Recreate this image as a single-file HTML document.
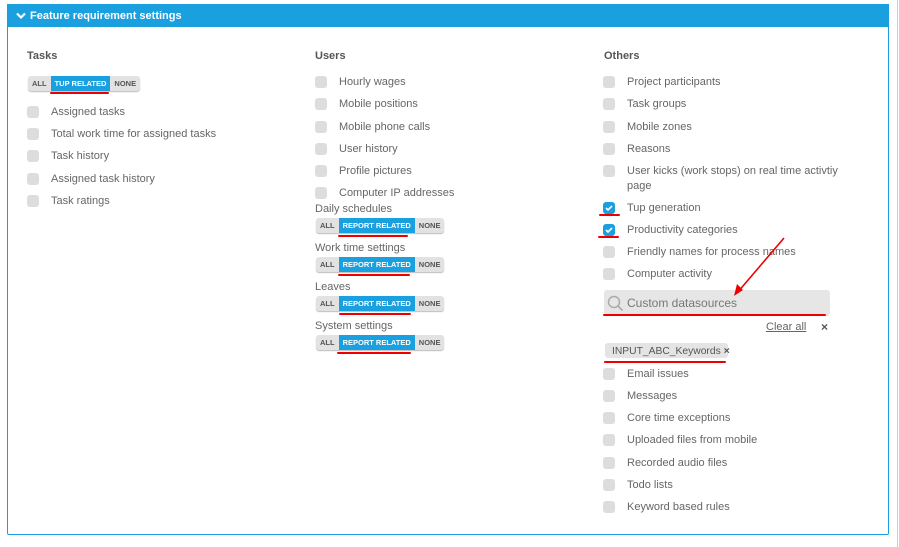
<!DOCTYPE html>
<html><head><style>
body{margin:0;width:899px;height:547px;background:#fff;font-family:"Liberation Sans",sans-serif;position:relative;overflow:hidden;color:#666}
.a{position:absolute;white-space:nowrap}
.panel{position:absolute;left:7px;top:4px;width:880px;height:529px;border:1px solid #1a9fdf;border-radius:2px}
.hdr{position:absolute;left:7px;top:4px;width:882px;height:23px;background:#1a9fdf;color:#fff;font-weight:bold;font-size:11px;line-height:23px}
.h{font-weight:bold;font-size:11px;color:#555;line-height:14px}
.cb{position:absolute;width:12px;height:12px;background:#ddd;border-radius:3px}
.cb svg{display:block}
.cb.on{background:#1a9fdf}
.l{font-size:11px;color:#666;line-height:14px}
.bg{position:absolute;height:15px;display:flex;font-size:7.5px;font-weight:bold;line-height:15px;border-radius:3px;overflow:hidden;background:#e2e2e2;color:#555;box-shadow:0 1px 1px #bbb}
.bg span{padding:0 4px}
.bg .s{background:#1a9fdf;color:#fff}
.red{position:absolute;height:2px;background:#e00;border-radius:1px}
</style></head><body>
<div class="panel"></div>
<div class="hdr"><svg style="position:absolute;left:9px;top:8px" width="10" height="8" viewBox="0 0 10 8"><path d="M1 1.5L5 5.5L9 1.5" stroke="#fff" stroke-width="2.2" fill="none"/></svg><span style="position:absolute;left:23px;top:1px">Feature requirement settings</span></div>
<div class="a h" style="left:27px;top:49px">Tasks</div>
<div class="a h" style="left:315px;top:49px">Users</div>
<div class="a h" style="left:604px;top:49px">Others</div>

<div class="bg" style="left:28px;top:76px"><span>ALL</span><span class="s">TUP RELATED</span><span>NONE</span></div>
<div class="red" style="left:50px;top:92px;width:59px"></div>

<div class="cb" style="left:27px;top:106px"></div><div class="a l" style="left:51px;top:105px">Assigned tasks</div>
<div class="cb" style="left:27px;top:128px"></div><div class="a l" style="left:51px;top:127px">Total work time for assigned tasks</div>
<div class="cb" style="left:27px;top:150px"></div><div class="a l" style="left:51px;top:149px">Task history</div>
<div class="cb" style="left:27px;top:173px"></div><div class="a l" style="left:51px;top:172px">Assigned task history</div>
<div class="cb" style="left:27px;top:195px"></div><div class="a l" style="left:51px;top:194px">Task ratings</div>

<div class="cb" style="left:315px;top:76px"></div><div class="a l" style="left:339px;top:75px">Hourly wages</div>
<div class="cb" style="left:315px;top:98px"></div><div class="a l" style="left:339px;top:97px">Mobile positions</div>
<div class="cb" style="left:315px;top:121px"></div><div class="a l" style="left:339px;top:120px">Mobile phone calls</div>
<div class="cb" style="left:315px;top:143px"></div><div class="a l" style="left:339px;top:142px">User history</div>
<div class="cb" style="left:315px;top:165px"></div><div class="a l" style="left:339px;top:164px">Profile pictures</div>
<div class="cb" style="left:315px;top:187px"></div><div class="a l" style="left:339px;top:186px">Computer IP addresses</div>
<div class="a l" style="left:315px;top:202px">Daily schedules</div>
<div class="bg" style="left:316px;top:218px"><span>ALL</span><span class="s">REPORT RELATED</span><span>NONE</span></div>
<div class="red" style="left:338px;top:235px;width:70px"></div>
<div class="a l" style="left:315px;top:241px">Work time settings</div>
<div class="bg" style="left:316px;top:257px"><span>ALL</span><span class="s">REPORT RELATED</span><span>NONE</span></div>
<div class="red" style="left:338px;top:274px;width:72px"></div>
<div class="a l" style="left:315px;top:280px">Leaves</div>
<div class="bg" style="left:316px;top:296px"><span>ALL</span><span class="s">REPORT RELATED</span><span>NONE</span></div>
<div class="red" style="left:339px;top:313px;width:72px"></div>
<div class="a l" style="left:315px;top:319px">System settings</div>
<div class="bg" style="left:316px;top:335px"><span>ALL</span><span class="s">REPORT RELATED</span><span>NONE</span></div>
<div class="red" style="left:337px;top:352px;width:74px"></div>

<div class="cb" style="left:603px;top:76px"></div><div class="a l" style="left:627px;top:75px">Project participants</div>
<div class="cb" style="left:603px;top:98px"></div><div class="a l" style="left:627px;top:97px">Task groups</div>
<div class="cb" style="left:603px;top:121px"></div><div class="a l" style="left:627px;top:120px">Mobile zones</div>
<div class="cb" style="left:603px;top:143px"></div><div class="a l" style="left:627px;top:142px">Reasons</div>
<div class="cb" style="left:603px;top:165px"></div><div class="a l" style="left:627px;top:164px;line-height:15px">User kicks (work stops) on real time activtiy<br>page</div>
<div class="cb on" style="left:603px;top:202px"><svg width="12" height="12"><path d="M3 6l2 2 4-4" stroke="#fff" stroke-width="1.6" fill="none"/></svg></div><div class="a l" style="left:627px;top:201px">Tup generation</div>
<div class="red" style="left:599px;top:214px;width:21px"></div>
<div class="cb on" style="left:603px;top:224px"><svg width="12" height="12"><path d="M3 6l2 2 4-4" stroke="#fff" stroke-width="1.6" fill="none"/></svg></div><div class="a l" style="left:627px;top:223px">Productivity categories</div>
<div class="red" style="left:598px;top:236px;width:21px"></div>
<div class="cb" style="left:603px;top:246px"></div><div class="a l" style="left:627px;top:245px">Friendly names for process names</div>
<div class="cb" style="left:603px;top:268px"></div><div class="a l" style="left:627px;top:267px">Computer activity</div>

<div class="a" style="left:604px;top:290px;width:226px;height:26px;background:#e6e6e6;border-radius:3px"></div>
<svg class="a" style="left:607px;top:295px" width="17" height="17"><circle cx="7" cy="7" r="5.5" stroke="#aaa" stroke-width="1.5" fill="none"/><path d="M11 11l4.5 4.5" stroke="#aaa" stroke-width="1.6"/></svg>
<div class="a" style="left:627px;top:296px;font-size:12px;color:#777;line-height:15px">Custom datasources</div>
<div class="red" style="left:603px;top:314px;width:223px"></div>
<svg class="a" style="left:730px;top:236px" width="56" height="62"><path d="M54 2L7 57" stroke="#e00" stroke-width="1.6"/><path d="M4 60l3-12 6 6z" fill="#e00"/></svg>
<div class="a l" style="left:766px;top:320px;text-decoration:underline">Clear all</div>
<div class="a" style="left:821px;top:320px;font-size:12px;font-weight:bold;color:#555;line-height:14px">×</div>
<div class="a" style="left:605px;top:343px;height:15px;width:123px;background:#e4e4e4;border-radius:3px"></div>
<div class="a l" style="left:612px;top:344px;color:#555;font-size:10.3px">INPUT_ABC_Keywords <b style="font-size:10.5px">×</b></div>
<div class="red" style="left:604px;top:361px;width:122px"></div>

<div class="cb" style="left:603px;top:368px"></div><div class="a l" style="left:627px;top:367px">Email issues</div>
<div class="cb" style="left:603px;top:390px"></div><div class="a l" style="left:627px;top:389px">Messages</div>
<div class="cb" style="left:603px;top:412px"></div><div class="a l" style="left:627px;top:411px">Core time exceptions</div>
<div class="cb" style="left:603px;top:434px"></div><div class="a l" style="left:627px;top:433px">Uploaded files from mobile</div>
<div class="cb" style="left:603px;top:457px"></div><div class="a l" style="left:627px;top:456px">Recorded audio files</div>
<div class="cb" style="left:603px;top:479px"></div><div class="a l" style="left:627px;top:478px">Todo lists</div>
<div class="cb" style="left:603px;top:501px"></div><div class="a l" style="left:627px;top:500px">Keyword based rules</div>
<div class="a" style="left:897px;top:0;width:1px;height:547px;background:#ccc"></div>
</body></html>
